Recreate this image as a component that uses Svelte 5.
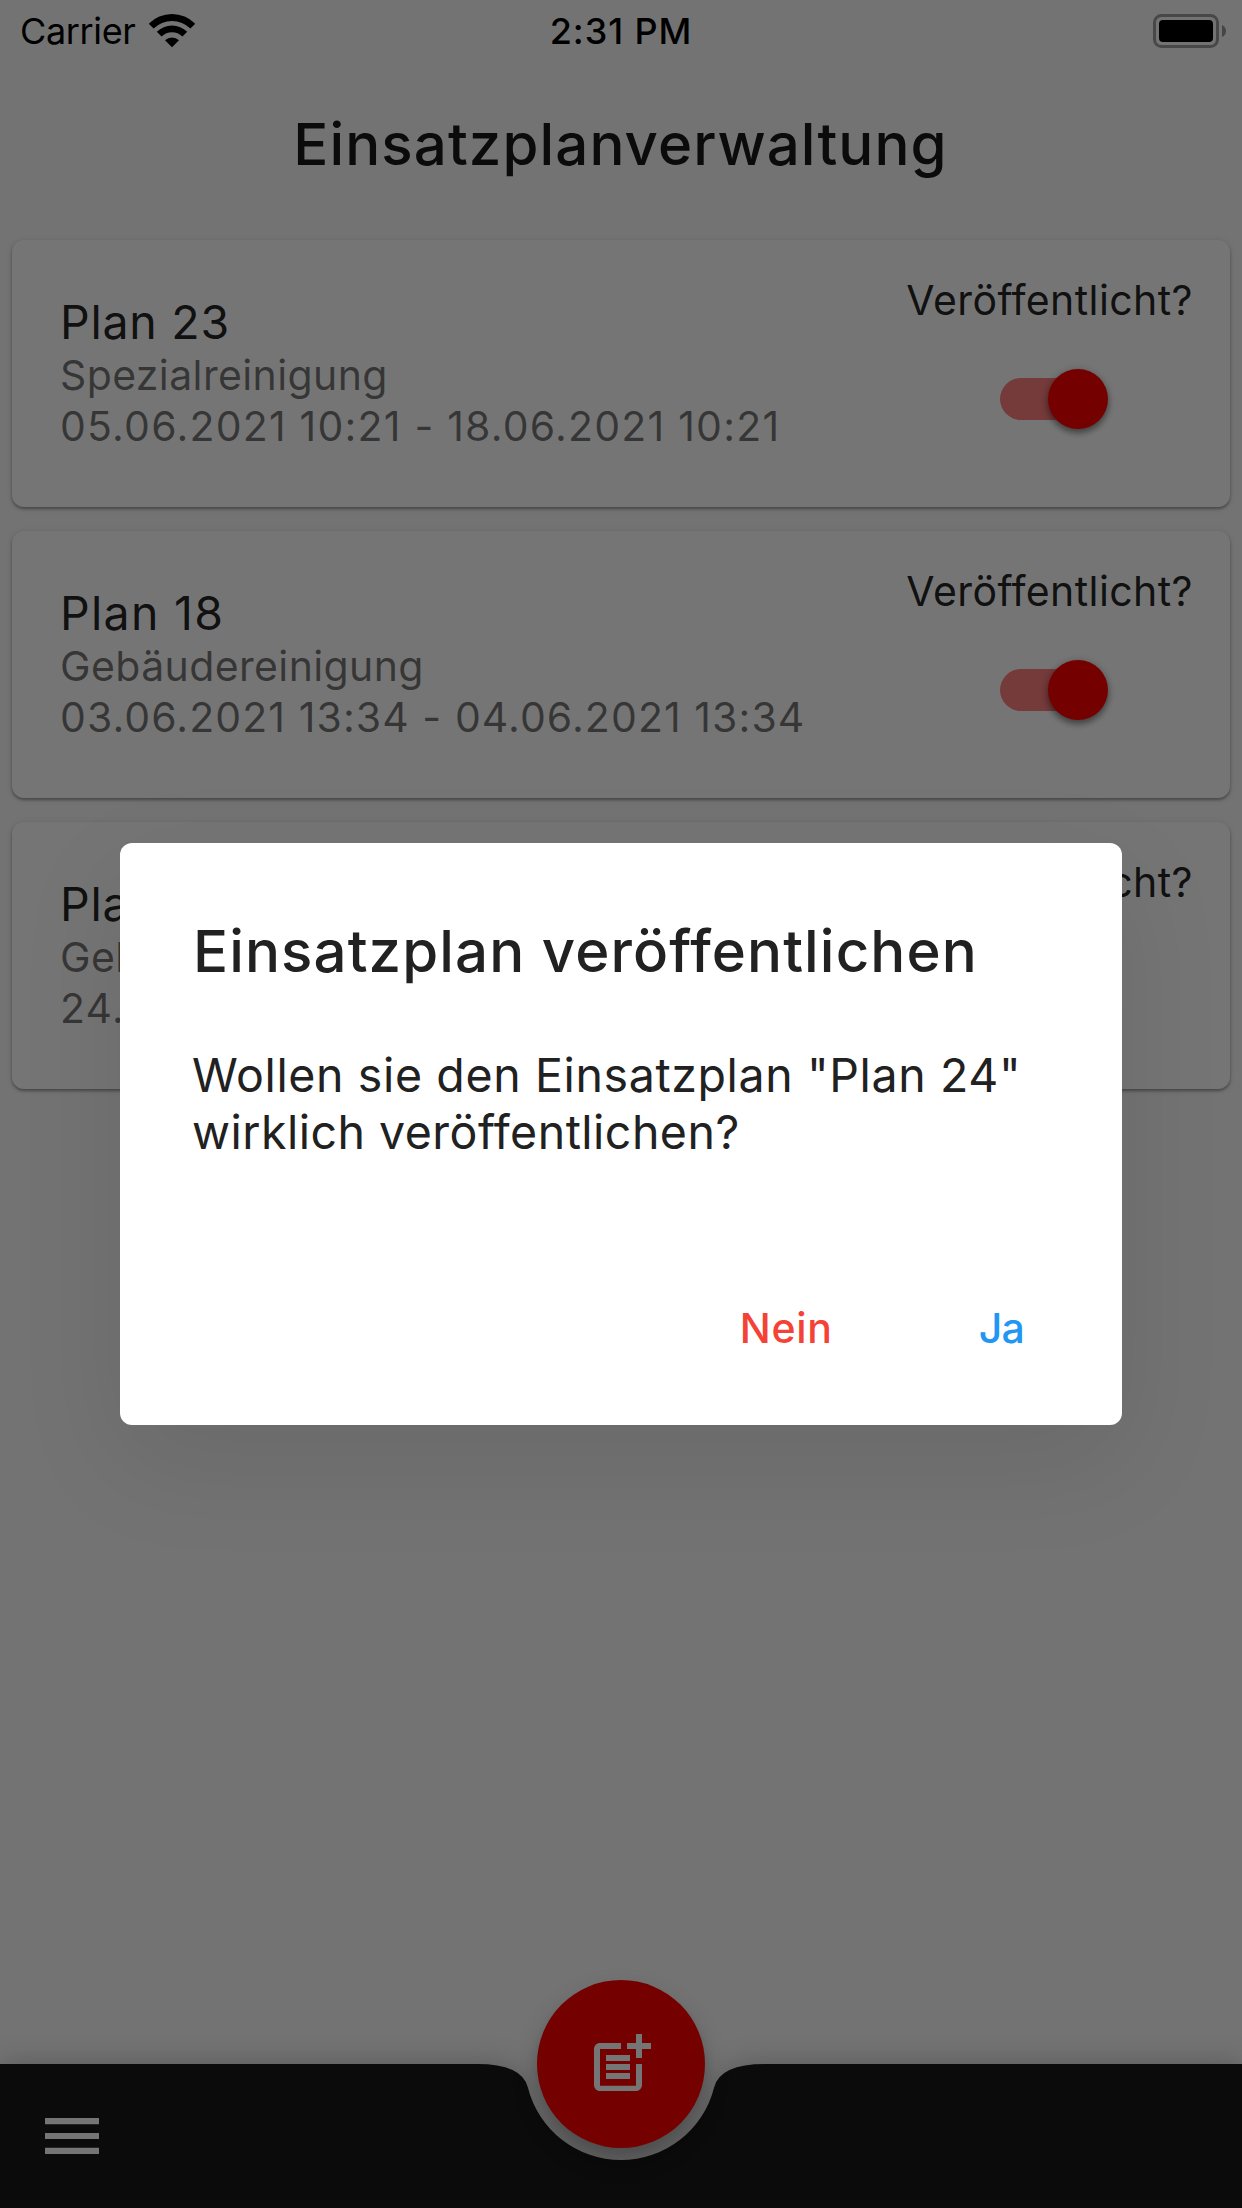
<script>
  let plans = $state([
    { name: 'Plan 23', kind: 'Spezialreinigung', period: '05.06.2021 10:21 - 18.06.2021 10:21', published: true },
    { name: 'Plan 18', kind: 'Gebäudereinigung', period: '03.06.2021 13:34 - 04.06.2021 13:34', published: true },
    { name: 'Plan 24', kind: 'Gebäudereinigung', period: '24.05.2021 10:00', published: false }
  ]);
</script>

<div class="screen">
  <div class="status-space"></div>
  <header class="app-bar"><h1>Einsatzplanverwaltung</h1></header>

  <ul class="plans">
    {#each plans as plan}
      <li class="card">
        <div class="info">
          <h2>{plan.name}</h2>
          <p>{plan.kind}</p>
          <p class="period">{plan.period}</p>
        </div>
        <div class="publish">
          <span>Veröffentlicht?</span>
          <button class="switch" class:on={plan.published} aria-label="Veröffentlicht" onclick={() => (plan.published = !plan.published)}>
            <i class="thumb"></i>
          </button>
        </div>
      </li>
    {/each}
  </ul>

  <footer class="bottom-bar">
    <svg class="bar-shape" viewBox="0 0 1242 144" width="1242" height="144" aria-hidden="true">
      <path d="M0 0H477Q522 0 527.9 23.45A96 96 0 0 0 714.1 23.45Q720 0 765 0H1242V144H0Z" fill="#181818" />
    </svg>
    <button class="menu" aria-label="Menü">
      <svg viewBox="0 0 72 72" width="72" height="72" fill="#fff">
        <path d="M9 18h54v6.2H9zM9 33h54v6H9zM9 47.8h54V54H9z" />
      </svg>
    </button>
    <button class="fab" aria-label="Plan hinzufügen">
      <svg viewBox="0 0 24 24" width="72" height="72" fill="#fff">
        <path d="M17 19.22H5V7h7V5H5c-1.1 0-2 .9-2 2v12c0 1.1.9 2 2 2h12c1.1 0 2-.9 2-2v-7h-2z" />
        <path d="M19 2h-2v3h-3v2h3v3h2V7h3V5h-3z" />
        <path d="M7 9h8v2H7zM7 12h8v2H7zM7 15h8v2H7z" />
      </svg>
    </button>
  </footer>

  <div class="scrim">
    <div class="status">
      <div class="carrier">
        <span>Carrier</span>
        <svg viewBox="0 0 46 34" width="46" height="34" aria-hidden="true">
          <path d="M-.3 9.7A33 33 0 0 1 46.3 9.7L41.4 14.6A26 26 0 0 0 4.6 14.6Z" />
          <path d="M7.8 17.8A21.6 21.6 0 0 1 38.2 17.8L33.4 22.6A14.7 14.7 0 0 0 12.6 22.6Z" />
          <path d="M16 26.3A10 10 0 0 1 30 26.3L23 33.2Z" />
        </svg>
      </div>
      <time>2:31 PM</time>
      <div class="battery">
        <svg viewBox="0 0 74 34" width="74" height="34" aria-hidden="true">
          <rect x="1.5" y="1.5" width="63" height="31" rx="7" fill="none" stroke="#000" stroke-opacity=".37" stroke-width="3" />
          <rect x="6" y="6" width="54" height="22" rx="4" />
          <path d="M69 11q4 2 4 6t-4 6z" fill-opacity=".4" />
        </svg>
      </div>
    </div>
    <div class="dialog" role="dialog" aria-modal="true">
      <h3>Einsatzplan veröffentlichen</h3>
      <p>Wollen sie den Einsatzplan "Plan 24"<br /><span class="second">wirklich veröffentlichen?</span></p>
      <div class="actions">
        <button class="no">Nein</button>
        <button class="yes">Ja</button>
      </div>
    </div>
  </div>
</div>

<style>
  :global(body) { margin: 0; }
  .screen {
    position: relative;
    display: flex;
    flex-direction: column;
    width: 1242px;
    height: 2208px;
    overflow: hidden;
    background: #fafafa;
    color: rgba(0, 0, 0, 0.87);
    font-family: Inter, "Liberation Sans", sans-serif;
    font-size: 41px;
  }
  h1, h2, h3, p, ul { margin: 0; padding: 0; font-weight: 400; }
  button { border: 0; padding: 0; background: none; font: inherit; }

  .status-space { height: 60px; }
  .app-bar { display: flex; align-items: center; justify-content: center; height: 168px; }
  h1 { font-size: 58.2px; font-weight: 500; letter-spacing: 1.1px; line-height: 70px; padding-right: 1px; color: #181818; }

  .plans { display: flex; flex: 1; flex-direction: column; gap: 24px; padding: 12px; list-style: none; }
  .card {
    display: flex;
    box-sizing: border-box;
    justify-content: space-between;
    height: 267px;
    padding: 0 37px 0 48px;
    border-radius: 12px;
    background: #fff;
    box-shadow: 0 2px 3px rgba(0, 0, 0, 0.32), 0 1px 6px rgba(0, 0, 0, 0.12);
  }
  .info { padding-top: 54px; }
  h2 { font-size: 46.5px; line-height: 56px; letter-spacing: 0.75px; }
  .info p { line-height: 51px; letter-spacing: 0.38px; color: rgba(0, 0, 0, 0.54); }
  .info .period { letter-spacing: 1.21px; }
  .card:nth-child(2) h2 { letter-spacing: 1.3px; }
  .card:nth-child(2) .period { letter-spacing: 1.08px; }

  .publish { display: flex; flex-direction: column; align-items: center; gap: 44px; padding-top: 35px; line-height: 50px; letter-spacing: 0.42px; }
  .switch { display: flex; align-items: center; box-sizing: border-box; width: 99px; height: 42px; margin: 9px 0 0 -1px; border-radius: 21px; background: rgba(0, 0, 0, 0.32); }
  .thumb { flex: none; width: 60px; height: 60px; margin-left: -9px; border-radius: 50%; background: #fafafa; box-shadow: 0 4px 6px rgba(0, 0, 0, 0.36), 0 1px 10px rgba(0, 0, 0, 0.2); }
  .on { background: rgba(255, 0, 0, 0.5); }
  .on .thumb { margin-left: 48px; background: #f00; }

  .bottom-bar { position: relative; display: flex; align-items: center; height: 144px; }
  .bar-shape { position: absolute; inset: 0; overflow: visible; filter: drop-shadow(0 0 14px rgba(0, 0, 0, 0.22)); }
  .menu { position: relative; display: flex; margin-left: 36px; }
  .fab {
    position: absolute;
    top: -84px;
    left: 537px;
    display: flex;
    align-items: center;
    justify-content: center;
    width: 168px;
    height: 168px;
    border-radius: 50%;
    background: #f00;
    box-shadow: 0 9px 15px -3px rgba(0, 0, 0, 0.2), 0 12px 26px rgba(0, 0, 0, 0.18);
  }

  .scrim { position: absolute; inset: 0; background: rgba(0, 0, 0, 0.54); }
  .status { display: grid; grid-template-columns: 1fr auto 1fr; align-items: center; height: 60px; color: #000; font-size: 36px; line-height: 62px; }
  .carrier { display: flex; align-items: center; gap: 14px; padding-left: 20px; letter-spacing: -0.36px; }
  time { font-weight: 500; letter-spacing: 0.9px; }
  .battery { display: flex; justify-content: flex-end; padding-right: 15px; }

  .dialog {
    box-sizing: border-box;
    width: 1002px;
    height: 582px;
    margin: 783px auto 0;
    padding: 73px 74px 0 73px;
    border-radius: 12px;
    background: #fff;
    color: #212121;
    box-shadow: 0 36px 110px rgba(0, 0, 0, 0.085);
  }
  h3 { font-size: 58.2px; font-weight: 500; letter-spacing: 1.1px; line-height: 70px; white-space: nowrap; }
  .dialog p { margin: 61px 0 0 -1px; font-size: 46.5px; line-height: 57px; letter-spacing: 0.62px; white-space: nowrap; }
  .second { letter-spacing: 0.48px; }
  .actions { display: flex; justify-content: flex-end; gap: 98px; margin-top: 113px; }
  .actions button { height: 108px; padding: 0 24px; font-weight: 500; }
  .no { color: #f44336; letter-spacing: 0.7px; }
  .yes { color: #2196f3; letter-spacing: -0.78px; }
</style>
